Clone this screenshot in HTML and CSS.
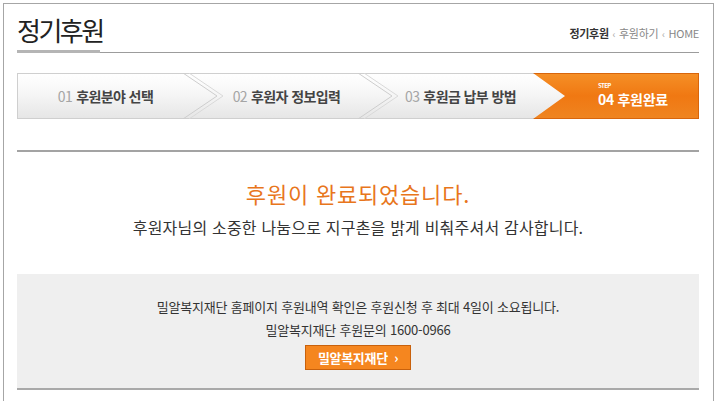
FILE: index.html
```html
<!DOCTYPE html>
<html lang="ko">
<head>
    <meta charset="UTF-8">
    <title>정기후원</title>
    <link rel="stylesheet" href="styles.css">
</head>
<body>
    <div class="page">
        <div class="page-head">
            <h2 class="page-title">정기후원</h2>
            <div class="location">
                <strong>정기후원</strong>
                <span class="sep">&lsaquo;</span>
                <span>후원하기</span>
                <span class="sep">&lsaquo;</span>
                <span>HOME</span>
            </div>
        </div>

        <ol class="steps">
            <li class="step step-1">
                <span class="num">01</span> 후원분야 선택
                <svg class="chev" width="44" height="46" viewBox="0 0 44 46"><polyline points="4,0 38,23 4,46" fill="none" stroke="#cdcdcd"/><polyline points="10,0 44,23 10,46" fill="none" stroke="#d9d9d9"/></svg>
            </li>
            <li class="step step-2">
                <span class="num">02</span> 후원자 정보입력
                <svg class="chev" width="44" height="46" viewBox="0 0 44 46"><polyline points="4,0 38,23 4,46" fill="none" stroke="#cdcdcd"/><polyline points="10,0 44,23 10,46" fill="none" stroke="#d9d9d9"/></svg>
            </li>
            <li class="step step-3">
                <span class="num">03</span> 후원금 납부 방법
            </li>
            <li class="step step-4 on">
                <span class="step-label">STEP</span>
                <span class="step-text">04 후원완료</span>
            </li>
        </ol>

        <div class="done">
            <p class="done-title">후원이 완료되었습니다.</p>
            <p class="done-text">후원자님의 소중한 나눔으로 지구촌을 밝게 비춰주셔서 감사합니다.</p>
        </div>

        <div class="notice">
            <p>밀알복지재단 홈페이지 후원내역 확인은 후원신청 후 최대 4일이 소요됩니다.</p>
            <p>밀알복지재단 후원문의 1600-0966</p>
            <a href="#" class="btn-orange">밀알복지재단 <span class="arr">&rsaquo;</span></a>
        </div>
    </div>
</body>
</html>
```

FILE: styles.css
```css
body {
    margin: 0;
    font-family: "Noto Sans CJK KR", "Noto Sans", sans-serif;
    color: #333;
    background: #fff;
}

.page {
    margin: 3px;
    width: 682px;
    height: 420px;
    border: 1px solid #a6a6a6;
    padding: 10px 14px 0 13px;
}

/* title + breadcrumb */
.page-head {
    display: flex;
    justify-content: space-between;
    align-items: flex-end;
    border-bottom: 1px solid #9c9c9c;
}

.page-title {
    margin: 0 0 -1px;
    padding: 0 0 4px;
    font-size: 26px;
    font-weight: normal;
    line-height: 32px;
    color: #222;
    border-bottom: 3px solid #b5b5b5;
    width: 83px;
    letter-spacing: -2.5px;
    white-space: nowrap;
}

.location {
    font-size: 11px;
    color: #888;
    padding-bottom: 11px;
    letter-spacing: -0.3px;
}

.location strong {
    color: #333;
    font-weight: bold;
}

.location .sep {
    color: #aaa;
    font-size: 10px;
    margin: 0 1px;
}

/* steps */
.steps {
    list-style: none;
    margin: 20px 0 0;
    padding: 0;
    display: flex;
    height: 46px;
}

.step {
    position: relative;
    box-sizing: border-box;
    height: 46px;
    display: flex;
    align-items: center;
    justify-content: center;
    font-size: 14px;
    font-weight: bold;
    color: #444;
    letter-spacing: -0.6px;
    background: linear-gradient(#ffffff, #f6f6f6 45%, #e6e6e6);
    border-top: 1px solid #cfcfcf;
    border-bottom: 1px solid #cfcfcf;
}

.step .num {
    font-weight: normal;
    color: #a5a5a5;
    margin-right: 4px;
}

.step-1 {
    width: 196px;
    border-left: 1px solid #cfcfcf;
    padding-right: 20px;
}

.step-2 {
    width: 175px;
    padding-right: 28px;
}

.step-3 {
    width: 177px;
    padding-right: 32px;
}

.chev {
    position: absolute;
    top: -1px;
    right: -10px;
    z-index: 1;
}

.step-4 {
    width: 166px;
    margin-left: -32px;
    flex-direction: column;
    align-items: flex-start;
    padding: 0 0 3px 65px;
    color: #fff;
    border: 1px solid #d8650c;
    border-left: 0;
    background: linear-gradient(#f58f26, #f07812 50%, #ef8420);
    clip-path: polygon(0 0, 100% 0, 100% 100%, 0 100%, 32px 50%);
}

.step-label {
    font-size: 6px;
    line-height: 6px;
    margin-bottom: 3px;
}

.step-text {
    font-size: 14px;
    line-height: 15px;
    letter-spacing: -0.3px;
}

/* complete message */
.done {
    border-top: 2px solid #a3a3a3;
    margin-top: 31px;
    padding-top: 26px;
    text-align: center;
}

.done p {
    margin: 0;
}

.done .done-title {
    font-size: 22px;
    line-height: 30px;
    color: #e8761c;
    letter-spacing: 0.8px;
}

.done .done-text {
    margin-top: 8px;
    font-size: 16px;
    line-height: 22px;
    color: #333;
    letter-spacing: 0.2px;
}

/* notice box */
.notice {
    margin-top: 36px;
    background: #efefef;
    border-bottom: 2px solid #a9a9a9;
    height: 116px;
    box-sizing: border-box;
    padding-top: 21px;
    text-align: center;
    font-size: 13px;
    color: #333;
    letter-spacing: -0.2px;
}

.notice p {
    margin: 0;
    line-height: 23px;
}

.btn-orange {
    display: inline-block;
    margin-top: 4px;
    width: 106px;
    height: 25px;
    box-sizing: border-box;
    line-height: 23px;
    background: #f5861f;
    border: 1px solid #c8610c;
    color: #fff;
    font-size: 13px;
    font-weight: bold;
    text-decoration: none;
    letter-spacing: -0.3px;
}

.btn-orange .arr {
    margin-left: 3px;
}
```
